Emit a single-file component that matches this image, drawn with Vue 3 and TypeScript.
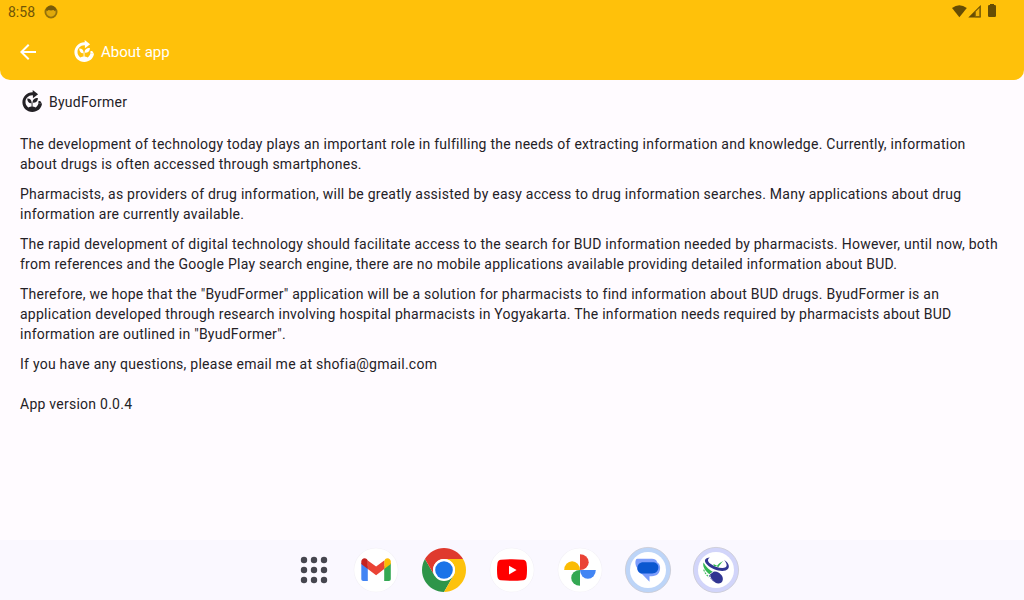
<script setup lang="ts">
interface Paragraph {
  lines: string[]
}

const paragraphs: Paragraph[] = [
  {
    lines: [
      'The development of technology today plays an important role in fulfilling the needs of extracting information and knowledge. Currently, information',
      'about drugs is often accessed through smartphones.',
    ],
  },
  {
    lines: [
      'Pharmacists, as providers of drug information, will be greatly assisted by easy access to drug information searches. Many applications about drug',
      'information are currently available.',
    ],
  },
  {
    lines: [
      'The rapid development of digital technology should facilitate access to the search for BUD information needed by pharmacists. However, until now, both',
      'from references and the Google Play search engine, there are no mobile applications available providing detailed information about BUD.',
    ],
  },
  {
    lines: [
      'Therefore, we hope that the "ByudFormer" application will be a solution for pharmacists to find information about BUD drugs. ByudFormer is an',
      'application developed through research involving hospital pharmacists in Yogyakarta. The information needs required by pharmacists about BUD',
      'information are outlined in "ByudFormer".',
    ],
  },
  { lines: ['If you have any questions, please email me at shofia@gmail.com'] },
]

const gridDots: number[] = [4, 14, 24]
</script>

<template>
  <div class="screen">
    <svg class="defs" width="0" height="0" aria-hidden="true">
      <symbol id="brand" viewBox="0 0 24 24">
        <path
          d="M12.7 2.2V0l5.4 4.2-5.2 4V5.4C8.8 5 5.5 8.2 5.5 12c0 2.3 1 4.2 2.8 5.4 2-1.2 5.4-1.2 7.4 0 1.2-.8 2.1-2 2.6-3.6h3.7c-.6 4.8-4.7 8.2-9.7 8.2-5.4 0-9.9-4.4-9.9-9.8 0-5.5 4.8-10.2 10.3-10z"
          fill="currentColor"
        />
        <path d="M18.5 11h1.7l1.8 2.8h-3.7z" fill="currentColor" />
        <path d="M11.6 13.2c-2.9.2-4.2-1.8-4.4-4.8 3.2.1 4.6 1.8 4.4 4.8z" fill="currentColor" />
        <path d="M12.6 12.7c-.2-3.2 1.7-4.8 5.3-4.8.1 3.4-1.8 5-5.3 4.8z" fill="currentColor" />
        <path d="M11.6 12.5h.9v5h-.9z" fill="currentColor" />
      </symbol>
    </svg>

    <header class="top">
      <div class="status">
        <span class="clock">8:58</span>
        <svg class="notice" width="14" height="14" viewBox="0 0 14 14">
          <circle cx="7" cy="7" r="5.6" fill="#e0a90b" stroke="#94720b" stroke-width="1.8" />
          <path d="M1.9 4Q3.8.4 7 .4T12.1 4L11.2 6.2 9.4 4.9 7 5.4 4.6 4.9 2.8 6.2z" fill="#785b09" />
        </svg>
        <svg class="signals" width="48" height="16" viewBox="0 0 48 16">
          <path d="M0 4.1Q7.4-1.6 14.8 4.1L7.4 13.2z" fill="#664d04" />
          <path d="M28.8 1v12.5H16.3z" fill="#664d04" />
          <path d="M23.5 7.7l4-4v8.6h-4z" fill="#f0b40a" />
          <path d="M23.2 7.6v5.2h5V3" fill="none" stroke="#886704" />
          <rect x="36" y="1" width="8" height="12" rx="1.2" fill="#664d04" />
          <rect x="38" y="0" width="4" height="2" fill="#664d04" />
        </svg>
      </div>
      <div class="bar">
        <svg class="back" width="24" height="24" viewBox="0 0 24 24">
          <path d="M20 11H7.83l5.59-5.59L12 4l-8 8 8 8 1.41-1.41L7.83 13H20z" fill="#fff" />
        </svg>
        <svg class="brand"><use href="#brand" /></svg>
        <h1>About app</h1>
      </div>
    </header>

    <main>
      <div class="name">
        <svg class="brand"><use href="#brand" /></svg>
        <span>ByudFormer</span>
      </div>
      <p v-for="(p, i) in paragraphs" :key="i">
        <span v-for="line in p.lines" :key="line">{{ line }}</span>
      </p>
      <p class="version"><span>App version 0.0.4</span></p>
    </main>

    <nav class="dock">
      <svg class="app launcher" viewBox="0 0 48 48">
        <g transform="translate(10 10)" fill="#45464f">
          <template v-for="y in gridDots" :key="y">
            <circle v-for="x in gridDots" :key="x" :cx="x" :cy="y" r="3.2" />
          </template>
        </g>
      </svg>

      <svg class="app" viewBox="0 0 48 48">
        <circle cx="24" cy="24" r="22.3" fill="#f1eff5" />
        <circle cx="24" cy="24" r="21.8" fill="#fff" />
        <path d="M9.3 17v16c0 1.1.8 2 1.9 2h4.6V20.3z" fill="#4285f4" />
        <path d="M32.2 20.3V35h4.7c1.1 0 1.9-.9 1.9-2V17z" fill="#34a853" />
        <path d="M32.2 15v8l6.6-5v-2.4c0-3-3.3-4.4-5.5-2.6z" fill="#fbbc04" />
        <path d="M15.8 23v-8.6l8.3 6.2 8.1-6.2V23l-8.1 6.2z" fill="#ea4335" />
        <path d="M9.3 15.6V18l6.5 5v-8.6L14.7 13c-2.1-1.8-5.4-.4-5.4 2.6z" fill="#c5221f" />
      </svg>

      <svg class="app" viewBox="0 0 48 48">
        <path d="M4.95 13A22 22 0 0 0 24 46L33.5 29.5 24 24 14.5 29.5z" fill="#2d9549" />
        <path d="M43.05 13A22 22 0 0 1 24 46L33.5 29.5A11 11 0 0 0 24 13z" fill="#fdc20c" />
        <path d="M4.95 13A22 22 0 0 1 43.05 13H24a11 11 0 0 0-9.5 16.5z" fill="#df3a2e" />
        <circle cx="24" cy="24" r="11" fill="#fff" />
        <circle cx="24" cy="24" r="8.8" fill="#1a73e8" />
      </svg>

      <svg class="app" viewBox="0 0 48 48">
        <circle cx="24" cy="24" r="22.3" fill="#f1eff5" />
        <circle cx="24" cy="24" r="21.8" fill="#fff" />
        <path
          d="M13 13.8Q24 12.8 35 13.8 38 14 38.5 17q1 7 0 14-.5 2.9-3.5 3.2-11 1-22 0Q10 34 9.5 31q-1-7 0-14 .5-3 3.5-3.2z"
          fill="#f00"
        />
        <path d="M21 19.8v8.6l7.6-4.3z" fill="#fff" />
      </svg>

      <svg class="app" viewBox="0 0 48 48">
        <circle cx="24" cy="24" r="22.3" fill="#f1eff5" />
        <circle cx="24" cy="24" r="21.8" fill="#fff" />
        <path d="M24 8.3a8.7 7.9 0 0 1 0 15.8z" fill="#ea4335" />
        <path d="M39.8 24a7.9 8.8 0 0 1-15.8 0z" fill="#4285f4" />
        <path d="M24 39.8a8.8 7.9 0 0 1 0-15.8z" fill="#34a853" />
        <path d="M8.2 24a7.9 8.8 0 0 1 15.8 0z" fill="#fbbc04" />
      </svg>

      <svg class="app" viewBox="0 0 48 48">
        <circle cx="24" cy="24" r="22.6" fill="#bdd5f8" stroke="#c9c9d2" stroke-width=".8" />
        <circle cx="24" cy="24" r="18" fill="#fff" />
        <path
          d="M12.4 13c1.4-.2 3.8-.2 6.3-.2h9.2c3.1 0 4.8 1.3 5.2 3.4 2 1.1 3 3 3 5.5 0 5.4-3 8.2-8.3 8.6h-2.3v5.4l-7.3-7.4c-3-.8-5-3-5.3-6.7-1.4-2.3-2.3-6-.5-8.6z"
          fill="#7c9dfb"
        />
        <path
          d="M19.3 16.3h9.1c3.8 0 6 2.1 6 5 0 3.6-2.4 6.2-6.3 6.2h-8.8c-3.7 0-5.9-2.4-5.9-5.3 0-3.6 2.3-5.9 5.9-5.9z"
          fill="#0b57d0"
        />
      </svg>

      <svg class="app" viewBox="0 0 48 48">
        <circle cx="24" cy="24" r="22.6" fill="#d2d5fa" stroke="#c9c9d2" stroke-width=".8" />
        <circle cx="24" cy="24" r="18" fill="#fff" />
        <path
          d="M18 11.4c-5.6.2-6.4 3.6-3 7.2 5.6 5.8 17.3 8.6 20.9 4.5 2.2-2.6.6-6.4-3.9-9.3 2.8 3.4 3.5 6.2 1.6 7.4-3.4 2-11.2-.5-15.5-3.8-2.8-2.2-2.8-4.6-.1-6z"
          fill="#303592"
        />
        <path d="M11.5 16.6c-1 3 .4 7 5 10.9l2.9 2 2.1-3.3c-3.7-1.7-7.4-4.8-10-9.6z" fill="#35b653" />
        <path d="M11.7 23.6q1.7 4.9 5.5 7.4" stroke="#35b653" stroke-width="1.1" stroke-dasharray="2 1" fill="none" />
        <path d="M21.4 18l3.7 1.8c1.6-2 3.4-3.5 6.5-5-2.4 2.2-3.7 4.1-5.3 6.5l-2-1.2-2.2.3z" fill="#35b653" />
        <path
          d="M18.1 28.2c1.8-3 5.4-3.5 8.3-1.8 3.3 2 5.1 4.9 4.3 7.9-.8 3.2-4.6 4.3-7.6 2.1-3.1-2.3-5-5.3-5-8.2z"
          fill="#303592"
        />
        <path d="M17.7 28.2l3.5-2.4" stroke="#fff" stroke-width=".8" />
        <path d="M17.4 29.2q1.1 3.4 3.9 6.1" stroke="#303592" stroke-width=".8" stroke-dasharray="2 1" fill="none" />
      </svg>
    </nav>
  </div>
</template>

<style>
body {
  margin: 0;
  overflow: hidden;
}
</style>

<style scoped>
.screen {
  display: flex;
  flex-direction: column;
  width: 1024px;
  height: 600px;
  background: #fffbff;
  color: #242126;
  font-family: Roboto, sans-serif;
}
.defs {
  display: none;
}
.top {
  box-sizing: border-box;
  height: 80px;
  background: #ffc10a;
  border-radius: 0 0 10px 10px;
}
.status {
  display: flex;
  height: 24px;
  padding: 0 24px 0 8px;
}
.clock {
  width: 36px;
  color: #705507;
  font-size: 14px;
  line-height: 25px;
}
.notice {
  margin-top: 5px;
}
.signals {
  margin: 4px 0 0 auto;
}
.bar {
  display: flex;
  align-items: center;
  height: 56px;
  padding-left: 16px;
  color: #fff;
}
.brand {
  width: 24px;
  height: 24px;
  flex: none;
}
.bar .brand {
  margin: 0 5px 0 32px;
}
h1 {
  margin: 0;
  font-size: 15px;
  font-weight: 400;
  line-height: 24px;
}
main {
  flex: 1;
  padding: 10px 20px 0;
  font-size: 14px;
  line-height: 20px;
  letter-spacing: 0.25px;
}
.name {
  display: flex;
  align-items: center;
  gap: 5px;
  height: 24px;
  margin-bottom: 20px;
}
p {
  margin: 0 0 10px;
}
p span {
  display: block;
  white-space: nowrap;
}
.version {
  margin-top: 20px;
}
.dock {
  display: flex;
  justify-content: center;
  align-items: center;
  gap: 20px;
  height: 60px;
  padding-left: 5px;
  background: #faf8ff;
}
.app {
  width: 48px;
  height: 48px;
}
.launcher {
  margin-right: -6px;
}
</style>
